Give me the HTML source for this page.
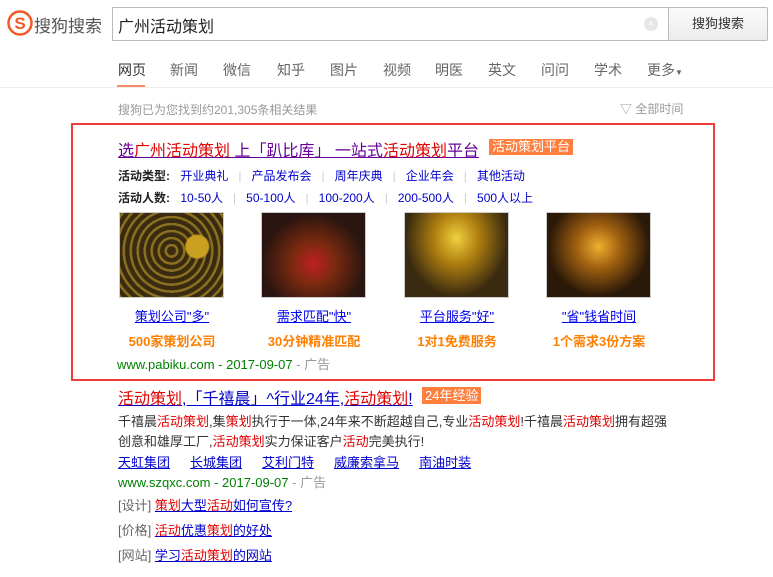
<!DOCTYPE html>
<html><head><meta charset="utf-8"><style>
*{margin:0;padding:0;box-sizing:border-box}
body{width:773px;height:577px;background:#fff;font-family:"Liberation Sans","Noto Sans CJK SC",sans-serif;position:relative;overflow:hidden;font-size:13px;color:#333}
.a{position:absolute;white-space:nowrap}
.r{color:#e10000}
a{color:#1a0dab}
.u{text-decoration:underline}
.nav span{position:absolute;top:60px;font-size:14px;color:#666}
.img{position:absolute;top:212px;width:105px;height:86px;border:1px solid #ccc}
.lk{position:absolute;top:306px;font-size:13px;color:#0000ee;text-decoration:underline;text-align:center;width:160px}
.og{position:absolute;top:331px;font-size:13px;color:#ff7f00;font-weight:bold;text-align:center;width:160px}
.b{color:#0000cc}
.sep{color:#ccc;margin:0 10px}
</style></head><body>
<svg class="a" style="left:7px;top:10px" width="26" height="26" viewBox="0 0 26 26"><circle cx="13" cy="13" r="11.5" fill="none" stroke="#f05a28" stroke-width="2.5"/><text x="13" y="19" text-anchor="middle" font-size="17" font-weight="bold" fill="#f05a28" font-family="Liberation Sans">S</text></svg>
<div class="a" style="left:34px;top:12px;font-size:17px;color:#555">搜狗搜索</div>
<div class="a" style="left:112px;top:7px;width:557px;height:34px;border:1px solid #bbb;border-right:none"></div>
<div class="a" style="left:118px;top:13px;font-size:16px;color:#222">广州活动策划</div>
<div class="a" style="left:644px;top:17px;width:14px;height:14px;border-radius:50%;background:#e6e6e6;color:#fff;font-size:11px;line-height:14px;text-align:center">×</div>
<div class="a" style="left:668px;top:7px;width:100px;height:34px;border:1px solid #bbb;background:linear-gradient(#fafafa,#ececec);text-align:center;line-height:32px;font-size:13px;color:#333;border-radius:0 2px 2px 0">搜狗搜索</div>
<div class="nav"><span style="left:118px;color:#333">网页</span><span style="left:170px">新闻</span><span style="left:223px">微信</span><span style="left:277px">知乎</span><span style="left:330px">图片</span><span style="left:383px">视频</span><span style="left:435px">明医</span><span style="left:488px">英文</span><span style="left:541px">问问</span><span style="left:594px">学术</span><span style="left:647px">更多<small style="font-size:8px">▼</small></span></div>
<div class="a" style="left:117px;top:85px;width:28px;height:2px;background:#f68a6a"></div>
<div class="a" style="left:0;top:87px;width:773px;height:1px;background:#eee"></div>
<div class="a" style="left:118px;top:101px;font-size:12px;color:#999">搜狗已为您找到约201,305条相关结果</div>
<div class="a" style="left:620px;top:100px;font-size:12px;color:#999">▽ 全部时间</div>
<div class="a" style="left:71px;top:123px;width:644px;height:258px;border:2px solid #f03c3c"></div>
<div class="a" style="left:118px;top:137px;font-size:16px;color:#660099;text-decoration:underline">选<span class="r">广州活动策划</span> 上「趴比库」 一站式<span class="r">活动策划</span>平台</div>
<div class="a" style="left:489px;top:139px;background:#ff7f3f;color:#fff;font-size:13px;padding:0 3px;line-height:16px">活动策划平台</div>
<div class="a" style="left:118px;top:167px;font-size:12px"><b style="color:#222">活动类型:</b> <span class="b" style="margin-left:7px">开业典礼</span><span class="sep">|</span><span class="b">产品发布会</span><span class="sep">|</span><span class="b">周年庆典</span><span class="sep">|</span><span class="b">企业年会</span><span class="sep">|</span><span class="b">其他活动</span></div>
<div class="a" style="left:118px;top:189px;font-size:12px"><b style="color:#222">活动人数:</b> <span class="b" style="margin-left:7px">10-50人</span><span class="sep">|</span><span class="b">50-100人</span><span class="sep">|</span><span class="b">100-200人</span><span class="sep">|</span><span class="b">200-500人</span><span class="sep">|</span><span class="b">500人以上</span></div>
<div class="img" style="left:119px;background:radial-gradient(circle at 75% 40%,#c9a020 0 12%,transparent 14%),repeating-radial-gradient(circle at 50% 45%,#3a2a10 0 4px,#8a7020 5px 7px),#201510"></div>
<div class="img" style="left:261px;background:radial-gradient(ellipse at 50% 60%,#c02020 0,#7a2a10 30%,#2a1510 70%),#1a1008"></div>
<div class="img" style="left:404px;background:radial-gradient(ellipse at 50% 30%,#f0d040 0,#b08010 30%,#3a2a10 70%),#201508"></div>
<div class="img" style="left:546px;background:radial-gradient(ellipse at 50% 40%,#f0b030 0,#a06010 30%,#2a1808 70%),#150c05"></div>
<div class="lk" style="left:92px">策划公司"多"</div>
<div class="lk" style="left:234px">需求匹配"快"</div>
<div class="lk" style="left:377px">平台服务"好"</div>
<div class="lk" style="left:519px">"省"钱省时间</div>
<div class="og" style="left:92px">500家策划公司</div>
<div class="og" style="left:234px">30分钟精准匹配</div>
<div class="og" style="left:377px">1对1免费服务</div>
<div class="og" style="left:519px">1个需求3份方案</div>
<div class="a" style="left:117px;top:354px;font-size:13px;color:#008000">www.pabiku.com - 2017-09-07 <span style="color:#999">- 广告</span></div>
<div class="a" style="left:118px;top:385px;font-size:16px;color:#0000cc;text-decoration:underline"><span class="r">活动策划</span>,「千禧晨」^行业24年,<span class="r">活动策划</span>!</div>
<div class="a" style="left:422px;top:387px;background:#ff7f3f;color:#fff;font-size:13px;padding:0 3px;line-height:17px">24年经验</div>
<div class="a" style="left:118px;top:412px;font-size:13px;line-height:20px">千禧晨<span class="r">活动策划</span>,集<span class="r">策划</span>执行于一体,24年来不断超越自己,专业<span class="r">活动策划</span>!千禧晨<span class="r">活动策划</span>拥有超强<br>创意和雄厚工厂,<span class="r">活动策划</span>实力保证客户<span class="r">活动</span>完美执行!</div>
<div class="a" style="left:118px;top:452px;font-size:13px;color:#0000cc;text-decoration:underline;word-spacing:0"><span>天虹集团</span><span style="margin-left:20px">长城集团</span><span style="margin-left:20px">艾利门特</span><span style="margin-left:20px">威廉索拿马</span><span style="margin-left:20px">南油时装</span></div>
<div class="a" style="left:118px;top:472px;font-size:13px;color:#008000">www.szqxc.com - 2017-09-07 <span style="color:#999">- 广告</span></div>
<div class="a" style="left:118px;top:495px;font-size:13px;color:#666">[设计] <span class="b u"><span class="r">策划</span>大型<span class="r">活动</span>如何宣传?</span></div>
<div class="a" style="left:118px;top:520px;font-size:13px;color:#666">[价格] <span class="b u"><span class="r">活动</span>优惠<span class="r">策划</span>的好处</span></div>
<div class="a" style="left:118px;top:545px;font-size:13px;color:#666">[网站] <span class="b u">学习<span class="r">活动策划</span>的网站</span></div>
</body></html>
